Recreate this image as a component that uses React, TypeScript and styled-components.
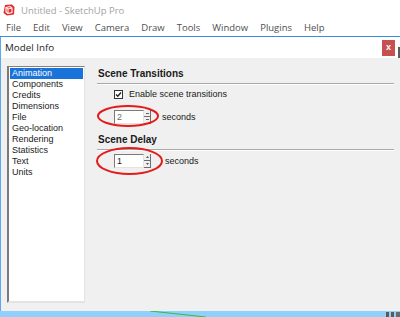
import React from 'react';
import styled, { createGlobalStyle } from 'styled-components';

const GlobalStyle = createGlobalStyle`
  html, body {
    margin: 0;
    padding: 0;
    background: #ffffff;
  }
  body {
    width: 400px;
    height: 317px;
    overflow: hidden;
  }
`;

const uiFont = `"Open Sans", "Noto Sans", sans-serif`;
const dlgFont = `"Liberation Sans", Arial, sans-serif`;

const Screen = styled.div`
  width: 400px;
  height: 317px;
  display: flex;
  flex-direction: column;
  background: #ffffff;
  overflow: hidden;
`;

const TitleBar = styled.div`
  height: 20px;
  display: flex;
  align-items: center;
  gap: 6px;
  padding-left: 3px;
  font-family: ${uiFont};
  font-size: 9.5px;
  color: #a3a3a3;
`;

const MenuBar = styled.div`
  height: 16px;
  display: flex;
  align-items: center;
  gap: 12px;
  padding-left: 6px;
  font-family: ${uiFont};
  font-size: 9.5px;
  color: #4f4f4f;
  border-bottom: 1px solid #3b8de2;
`;

const MenuItem = styled.span`
  line-height: 16px;
`;

const Workspace = styled.div`
  flex: 1;
  display: flex;
  min-height: 0;
`;

const Dialog = styled.div`
  flex: 1;
  display: flex;
  flex-direction: column;
  border-left: 1px solid #5aa9ee;
`;

const RightEdge = styled.div`
  width: 2px;
  background: linear-gradient(#ffffff 0 10px, #5c5c5c 10px 21px, #f0f0f0 21px);
`;

const DialogHeader = styled.div`
  height: 21px;
  display: flex;
  align-items: center;
  justify-content: space-between;
  padding: 0 3px 0 4px;
  background: #ffffff;
  font-family: ${uiFont};
  font-size: 9.8px;
  color: #1e1e1e;
`;

const CloseButton = styled.div`
  width: 13px;
  height: 16px;
  background: #c75050;
  color: #ffffff;
  font-family: ${dlgFont};
  font-weight: bold;
  font-size: 9px;
  display: flex;
  align-items: center;
  justify-content: center;
  line-height: 1;
`;

const DialogBody = styled.div`
  flex: 1;
  display: flex;
  gap: 12px;
  padding: 8px 4px 8px 6px;
  background: #f0f0f0;
  font-family: ${dlgFont};
  font-size: 9px;
  color: #1a1a1a;
`;

const ListBox = styled.div`
  width: 73px;
  display: flex;
  flex-direction: column;
  padding: 1px;
  background: #ffffff;
  border-top: 1px solid #828282;
  border-left: 2px solid #7a7a7a;
  border-right: 1px solid #e3e3e3;
  border-bottom: 2px solid #e3e3e3;
`;

const ListItem = styled.div<{ $active?: boolean }>`
  height: 11px;
  line-height: 11px;
  padding-left: 2px;
  font-size: 9px;
  background: ${({ $active }) => ($active ? '#1a73d9' : 'transparent')};
  color: ${({ $active }) => ($active ? '#ffffff' : '#1a1a1a')};
`;

const Panel = styled.div`
  flex: 1;
  display: flex;
  flex-direction: column;
`;

const SectionTitle = styled.div`
  font-weight: bold;
  font-size: 10px;
  height: 15px;
  line-height: 15px;
  padding-left: 1px;
`;

const Separator = styled.div`
  height: 0;
  border-top: 1px solid #a9a9a9;
  border-bottom: 1px solid #ffffff;
  margin: 2px 0 3px;
`;

const CheckRow = styled.label`
  display: flex;
  align-items: center;
  gap: 6px;
  height: 12px;
  padding-left: 17px;
  margin-bottom: 10px;
`;

const CheckBox = styled.span`
  width: 7px;
  height: 7px;
  border: 1px solid #333333;
  background: #ffffff;
  display: flex;
  align-items: center;
  justify-content: center;
`;

const SpinRow = styled.div<{ $gap: number }>`
  position: relative;
  display: flex;
  align-items: center;
  height: 14px;
  padding-left: 17px;
  margin-bottom: 8px;

  & > span {
    margin-left: ${({ $gap }) => $gap}px;
  }
`;

const SpinInput = styled.div<{ $dim?: boolean }>`
  width: 26px;
  height: 12px;
  line-height: 12px;
  padding-left: 2px;
  background: #ffffff;
  border-top: 1px solid #7a7a7a;
  border-left: 1px solid #7a7a7a;
  border-right: 1px solid #e3e3e3;
  border-bottom: 1px solid #e3e3e3;
  color: ${({ $dim }) => ($dim ? '#6d6d6d' : '#1a1a1a')};
`;

const SpinButtons = styled.div`
  width: 7px;
  height: 14px;
  display: flex;
  flex-direction: column;
`;

const SpinHalf = styled.div`
  flex: 1;
  display: flex;
  align-items: center;
  justify-content: center;
  border-right: 1px solid #6e6e6e;
  border-bottom: 1px solid #6e6e6e;
  background: #f0f0f0;
`;

const Annotation = styled.svg`
  position: absolute;
  overflow: visible;
  pointer-events: none;
`;

const BottomBand = styled.div`
  height: 6px;
  background: #91d0fb;
  position: relative;
`;

const SketchLogo = () => (
  <svg width="12" height="12" viewBox="0 0 12 12">
    <path d="M2 1 L9 0.5 L11.5 3 L11 10.5 L4 11.5 L0.5 9 Z" fill="#e32b2b" />
    <path d="M3 3.5 L7 2.5 L9 4 L9 8.5 L5 9.5 L3 8 Z" fill="none" stroke="#ffffff" strokeWidth="1.1" />
    <path d="M3 3.5 L5 5 L9 4 M5 5 L5 9.5" fill="none" stroke="#ffffff" strokeWidth="1" />
  </svg>
);

const Spinner = ({ value, arrows }: { value: string; arrows?: boolean }) => (
  <>
    <SpinInput $dim={!arrows}>{value}</SpinInput>
    <SpinButtons>
      <SpinHalf>
        <svg width="3" height="2" viewBox="0 0 3 2">
          {arrows ? <path d="M1.5 0 L3 2 L0 2 Z" fill="#555" /> : <rect y="1" width="3" height="1" fill="#666" />}
        </svg>
      </SpinHalf>
      <SpinHalf>
        <svg width="3" height="2" viewBox="0 0 3 2">
          {arrows ? <path d="M0 0 L3 0 L1.5 2 Z" fill="#555" /> : <rect width="3" height="1" fill="#666" />}
        </svg>
      </SpinHalf>
    </SpinButtons>
    <span>seconds</span>
  </>
);

const menu = ['File', 'Edit', 'View', 'Camera', 'Draw', 'Tools', 'Window', 'Plugins', 'Help'];
const pages = [
  'Animation',
  'Components',
  'Credits',
  'Dimensions',
  'File',
  'Geo-location',
  'Rendering',
  'Statistics',
  'Text',
  'Units',
];

export default function App() {
  return (
    <Screen>
      <GlobalStyle />
      <TitleBar>
        <SketchLogo />
        <span>Untitled - SketchUp Pro</span>
      </TitleBar>
      <MenuBar>
        {menu.map((m) => (
          <MenuItem key={m}>{m}</MenuItem>
        ))}
      </MenuBar>
      <Workspace>
        <Dialog>
          <DialogHeader>
            <span>Model Info</span>
            <CloseButton>x</CloseButton>
          </DialogHeader>
          <DialogBody>
            <ListBox>
              {pages.map((p, i) => (
                <ListItem key={p} $active={i === 0}>
                  {p}
                </ListItem>
              ))}
            </ListBox>
            <Panel>
              <SectionTitle>Scene Transitions</SectionTitle>
              <Separator />
              <CheckRow>
                <CheckBox>
                  <svg width="7" height="7" viewBox="0 0 7 7">
                    <path d="M1 3.5 L2.8 5.3 L6 1.5" fill="none" stroke="#222" strokeWidth="1.4" />
                  </svg>
                </CheckBox>
                <span>Enable scene transitions</span>
              </CheckRow>
              <SpinRow $gap={11}>
                <Spinner value="2" />
                <Annotation width="62" height="22" style={{ left: 0, top: -5 }}>
                  <ellipse cx="31" cy="11" rx="30" ry="10" fill="none" stroke="#e21b1b" strokeWidth="2" />
                </Annotation>
              </SpinRow>
              <SectionTitle>Scene Delay</SectionTitle>
              <Separator />
              <SpinRow $gap={14}>
                <Spinner value="1" arrows />
                <Annotation width="67" height="28" style={{ left: -1, top: -7 }}>
                  <ellipse cx="33.5" cy="14" rx="32.5" ry="13" fill="none" stroke="#e21b1b" strokeWidth="2" />
                </Annotation>
              </SpinRow>
            </Panel>
          </DialogBody>
        </Dialog>
        <RightEdge />
      </Workspace>
      <BottomBand>
        <svg width="400" height="6" viewBox="0 0 400 6" style={{ position: 'absolute', left: 0, top: 0 }}>
          <path d="M150 0 L206 6" stroke="#2fbf3f" strokeWidth="1" />
          <rect x="386" y="1" width="3" height="5" fill="#5a5a5a" />
          <rect x="391" y="1" width="3" height="5" fill="#5a5a5a" />
          <rect x="396" y="1" width="4" height="5" fill="#6a6a6a" />
        </svg>
      </BottomBand>
    </Screen>
  );
}
